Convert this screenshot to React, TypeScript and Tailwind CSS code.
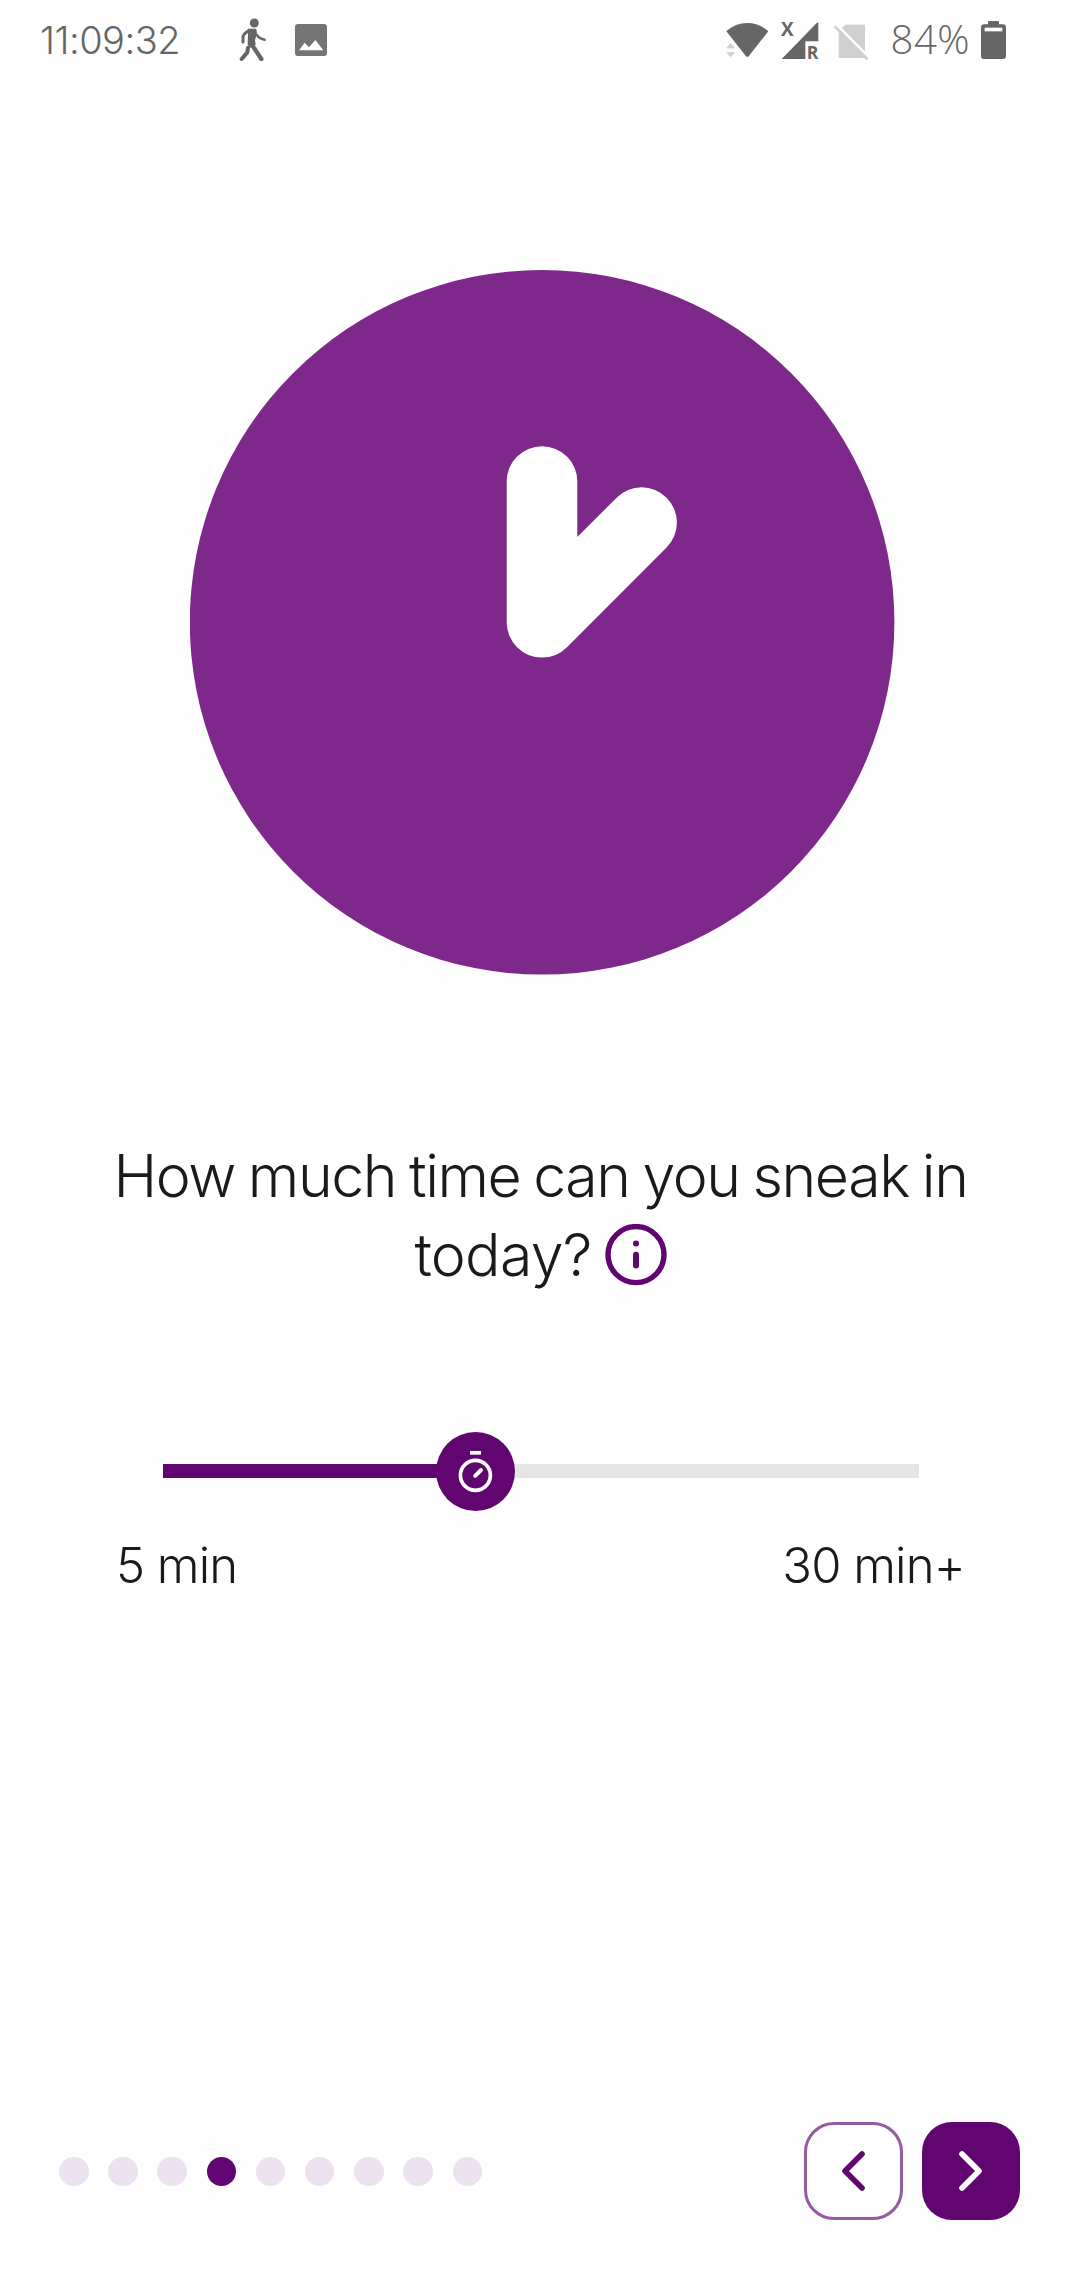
function WalkIcon() {
  return (
    <svg width="30" height="46" viewBox="0 0 90 138" fill="none" stroke="#666666" strokeLinecap="round" strokeLinejoin="round">
      <circle cx="46" cy="18" r="13.5" fill="#666666" stroke="none" />
      <path d="M28 37 L50 37 L52 46 L46 70 L48 82 L34 90 L28 82 L29 54 Z" fill="#666666" stroke="#666666" strokeWidth="4" />
      <path d="M31 41 C20 46 13 51 12 60 L12 75" strokeWidth="9" />
      <path d="M54 54 Q58 64 77 68" strokeWidth="7.5" />
      <path d="M38 82 L67 126" strokeWidth="13" />
      <path d="M27 92 L25 106 L8 126" strokeWidth="12" />
    </svg>
  );
}

function PictureIcon() {
  return (
    <svg width="32" height="32" viewBox="0 0 96 96">
      <rect width="96" height="96" rx="10" fill="#747474" />
      <path d="M12 79 L29 56 L42 70 L61 48 L85 79 Z" fill="#ffffff" />
    </svg>
  );
}

function WifiIcon() {
  return (
    <svg width="43" height="36" viewBox="0 0 129 108">
      <path d="M1 28 Q28 3 64 3 Q100 3 127 28 L68 103 Q64 107 60 103 Z" fill="#666666" />
      <path d="M14 63 L28 79 H0 Z M0 91 H28 L14 106 Z" fill="#d0d0d0" />
    </svg>
  );
}

function SignalIcon() {
  return (
    <svg className="overflow-visible" width="38" height="39" viewBox="0 0 114 117">
      <path d="M2 114 L108 5 Q112 2 112 7 V61 H73 V114 Z" fill="#666666" />
      <text x="0" y="44" fontSize="57" fontWeight="700" fontFamily="Open Sans, sans-serif" fill="#666666">X</text>
      <text x="77" y="114" fontSize="53" fontWeight="700" fontFamily="Open Sans, sans-serif" fill="#666666">R</text>
    </svg>
  );
}

function NoSimIcon() {
  return (
    <svg width="35" height="36" viewBox="0 0 105 108">
      <path d="M14 22 L34 2 H93 V102 H14 Z" fill="#d0d0d0" />
      <path d="M8 2 L104 100" stroke="#ffffff" strokeWidth="8" />
      <path d="M2 7 L101 106" stroke="#d0d0d0" strokeWidth="8" />
    </svg>
  );
}

function BatteryIcon() {
  return (
    <svg width="25" height="38" viewBox="0 0 75 114">
      <path d="M21 10 V3 Q21 0 24 0 H51 Q54 0 54 3 V10 H65 Q75 10 75 20 V104 Q75 114 65 114 H10 Q0 114 0 104 V20 Q0 10 10 10 Z" fill="#666666" />
      <rect x="11" y="20" width="53" height="11" fill="#ffffff" />
    </svg>
  );
}

function StatusBar() {
  return (
    <header className="flex h-20 items-center justify-between pl-10 pr-[74px] text-[#666666]">
      <div className="flex items-center">
        <span className="w-[199px] whitespace-nowrap font-['Inter',sans-serif] text-[38px] font-light leading-none tracking-[-0.5px]">11:09:32</span>
        <WalkIcon />
        <span className="ml-[26px]">
          <PictureIcon />
        </span>
      </div>
      <div className="flex items-center">
        <WifiIcon />
        <span className="ml-3">
          <SignalIcon />
        </span>
        <span className="ml-[15px] mt-[3px]">
          <NoSimIcon />
        </span>
        <span className="ml-[22px] mt-[-2px] whitespace-nowrap font-['Open_Sans',sans-serif] text-[40px] font-light leading-[48px] tracking-[0.5px]">84%</span>
        <span className="ml-[11px]">
          <BatteryIcon />
        </span>
      </div>
    </header>
  );
}

function Clock() {
  return (
    <svg className="ml-[190px] mt-[190px] shrink-0" width="705" height="705" viewBox="0 0 705 705">
      <circle cx="352.1" cy="352.3" r="352.3" fill="#7e288c" />
      <path d="M352 211.5 V352.3 L451.6 252.6" fill="none" stroke="#ffffff" strokeWidth="70.6" strokeLinecap="round" strokeLinejoin="round" />
    </svg>
  );
}

function InfoIcon() {
  return (
    <svg width="62" height="62" viewBox="0 0 62 62">
      <circle cx="31" cy="30.6" r="28" fill="none" stroke="#610570" strokeWidth="5.4" />
      <circle cx="31" cy="19.4" r="3" fill="#610570" />
      <path d="M31 30.8 V41.4" stroke="#610570" strokeWidth="6" strokeLinecap="round" />
    </svg>
  );
}

function TimeSlider() {
  return (
    <div className="relative ml-[163px] mt-[138px] flex h-[79px] w-[756px] items-start pt-8">
      <div className="h-[14px] w-[312px] bg-[#610570]" />
      <div className="h-[14px] flex-1 bg-[#e5e5e5]" />
      <div className="absolute left-[273px] top-0 size-[79px] rounded-full bg-[#610570]">
        <svg width="79" height="79" viewBox="0 0 79 79" fill="none" stroke="#ffffff">
          <circle cx="39.4" cy="43.3" r="15" strokeWidth="3.7" />
          <path d="M34 20.8 H45" strokeWidth="3.7" />
          <path d="M39.2 43.8 L45 38" strokeWidth="3.9" strokeLinecap="round" />
        </svg>
      </div>
    </div>
  );
}

const steps = [0, 1, 2, 3, 4, 5, 6, 7, 8];

function Footer() {
  return (
    <footer className="mb-[60px] mt-auto flex items-center justify-between pl-[59px] pr-[60px]">
      <div className="flex gap-[19.7px] pt-px">
        {steps.map((s) => (
          <span key={s} className={s === 3 ? "size-[29.5px] rounded-full bg-[#610570]" : "size-[29.5px] rounded-full bg-[#ebe1ef]"} />
        ))}
      </div>
      <div className="flex gap-[19px]">
        <button className="flex h-[98px] w-[99px] items-center justify-center rounded-[30px] border-[3px] border-[#935c9f] bg-white">
          <svg width="30" height="44" viewBox="0 0 30 44" fill="none" stroke="#610570" strokeWidth="5.6" strokeLinecap="round" strokeLinejoin="round">
            <path d="M23 5 L6 22 L23 39" />
          </svg>
        </button>
        <button className="flex size-[98px] items-center justify-center rounded-[30px] bg-[#610570]">
          <svg width="30" height="44" viewBox="0 0 30 44" fill="none" stroke="#ffffff" strokeWidth="5.6" strokeLinecap="round" strokeLinejoin="round">
            <path d="M6 5 L23 22 L6 39" />
          </svg>
        </button>
      </div>
    </footer>
  );
}

export default function App() {
  return (
    <main className="flex h-[2280px] w-[1080px] flex-col overflow-hidden bg-[#fefefe] font-['Inter',sans-serif] font-light text-[#1a1a1c]">
      <StatusBar />
      <Clock />
      <h1 className="mt-[161px] flex flex-col items-center whitespace-nowrap text-[59px] leading-[79px]">
        <span className="pl-px tracking-[-1.4px] [word-spacing:-2.4px]">How much time can you sneak in</span>
        <span className="flex items-center gap-[13px] pl-px tracking-[-0.7px]">
          today? <InfoIcon />
        </span>
      </h1>
      <TimeSlider />
      <div className="mt-[25px] flex justify-between pl-[116px] pr-[115px] text-[49px] leading-[60px] tracking-[-0.8px] [word-spacing:-0.5px]">
        <span>5 min</span>
        <span>30 min+</span>
      </div>
      <Footer />
    </main>
  );
}
